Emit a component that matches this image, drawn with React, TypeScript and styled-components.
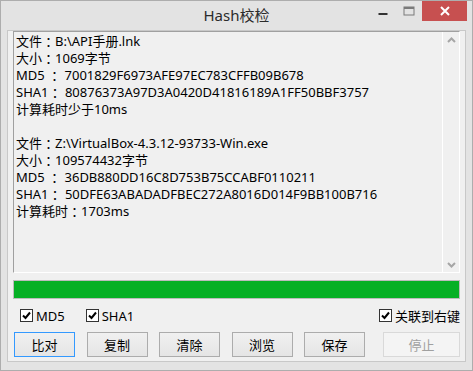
import React from 'react';
import styled, { createGlobalStyle } from 'styled-components';

const GlobalStyle = createGlobalStyle`
  html, body {
    margin: 0;
    padding: 0;
    background: #ffffff;
  }
  * {
    box-sizing: border-box;
  }
`;

const uiFont = `"Noto Sans", "Noto Sans CJK SC", sans-serif`;

const Window = styled.div`
  width: 473px;
  height: 371px;
  border: 1px solid #adadad;
  background-color: #e3e3e3;
  display: flex;
  flex-direction: column;
  font-family: ${uiFont};
`;

const TitleBar = styled.div`
  height: 29px;
  display: grid;
  grid-template-columns: 1fr auto 1fr;
  align-items: start;
`;

const Title = styled.div`
  grid-column: 2;
  padding-top: 4px;
  font-size: 15px;
  line-height: 20px;
  color: #2b2b2b;
`;

const Controls = styled.div`
  grid-column: 3;
  justify-self: end;
  display: flex;
  margin-right: 5px;
`;

const CtrlButton = styled.div<{ $wide?: boolean; $close?: boolean }>`
  width: ${({ $wide }) => ($wide ? '45px' : '26px')};
  height: 20px;
  display: flex;
  align-items: center;
  justify-content: center;
  background-color: ${({ $close }) => ($close ? '#c75050' : 'transparent')};
`;

const Client = styled.div`
  flex: 1;
  margin: 0 6px 8px 6px;
  border: 1px solid #c8c8c8;
  background-color: #f0f0f0;
  padding: 0 5px 4px 5px;
  display: flex;
  flex-direction: column;
`;

const TextBox = styled.div`
  height: 242px;
  border-top: 1px solid #a0a0a0;
  border-left: 1px solid #a0a0a0;
  border-right: 1px solid #ffffff;
  border-bottom: 1px solid #ffffff;
  display: flex;
  background-color: #f0f0f0;
`;

const TextArea = styled.div`
  flex: 1;
  padding: 1px 0 0 2px;
  font-family: ${uiFont};
  font-size: 13px;
  line-height: 17px;
  color: #000000;
  white-space: pre;
  overflow: hidden;
`;

const Line = styled.div`
  height: 17px;
`;

/* full-width colon centred like the Windows UI font */
const Colon = styled.span`
  display: inline-block;
  height: 17px;
  line-height: 17px;
  vertical-align: top;
  overflow: hidden;
  font-family: "Noto Sans CJK JP", "Noto Sans CJK SC", sans-serif;
`;

const ScrollBar = styled.div`
  width: 17px;
  border-left: 1px solid #ffffff;
  display: flex;
  flex-direction: column;
  justify-content: space-between;
  align-items: center;
  padding: 5px 0 4px 0;
`;

const Progress = styled.div`
  margin-top: 7px;
  height: 19px;
  border: 1px solid #bcbcbc;
  background-color: #e6e6e6;
`;

const ProgressFill = styled.div`
  height: 100%;
  background-color: #06b025;
`;

const CheckRow = styled.div`
  height: 33px;
  display: flex;
  align-items: center;
  padding: 0 0 0 7px;
`;

const CheckItem = styled.label<{ $push?: boolean }>`
  display: flex;
  align-items: center;
  gap: 3px;
  margin-right: 21px;
  margin-left: ${({ $push }) => ($push ? 'auto' : '0')};
  font-size: 13px;
  color: #000000;
  &:last-child {
    margin-right: 0;
  }
`;

const Box = styled.span`
  width: 13px;
  height: 13px;
  border: 1px solid #333333;
  background-color: #ffffff;
  display: flex;
  align-items: center;
  justify-content: center;
`;

const ButtonRow = styled.div`
  display: flex;
  gap: 11.5px;
  padding-left: 1px;
`;

const Button = styled.div<{ $default?: boolean; $disabled?: boolean; $width?: number }>`
  width: ${({ $width }) => $width ?? 61}px;
  height: 25px;
  display: flex;
  align-items: center;
  justify-content: center;
  font-size: 13px;
  color: ${({ $disabled }) => ($disabled ? '#a0a0a0' : '#000000')};
  border: 1px solid
    ${({ $default, $disabled }) =>
      $default ? '#3399ff' : $disabled ? '#d9d9d9' : '#acacac'};
  background: ${({ $disabled }) =>
    $disabled ? '#f4f4f4' : 'linear-gradient(#f0f0f0, #e5e5e5)'};
  margin-left: ${({ $disabled }) => ($disabled ? 'auto' : '0')};
`;

const Check = () => (
  <Box>
    <svg width="11" height="11" viewBox="0 0 11 11">
      <path d="M2 5.5 L4.5 8 L9 2.5" fill="none" stroke="#000" strokeWidth="2" />
    </svg>
  </Box>
);

const lines = [
  '文件：B:\\API手册.lnk',
  '大小：1069字节',
  'MD5 ： 7001829F6973AFE97EC783CFFB09B678',
  'SHA1： 80876373A97D3A0420D41816189A1FF50BBF3757',
  '计算耗时少于10ms',
  '',
  '文件：Z:\\VirtualBox-4.3.12-93733-Win.exe',
  '大小：109574432字节',
  'MD5 ： 36DB880DD16C8D753B75CCABF0110211',
  'SHA1： 50DFE63ABADADFBEC272A8016D014F9BB100B716',
  '计算耗时：1703ms',
];

const renderLine = (text: string) => {
  const parts = text.split('：');
  return parts.map((p, i) => (
    <React.Fragment key={i}>
      {i > 0 && <Colon>：</Colon>}
      {p}
    </React.Fragment>
  ));
};

const App: React.FC = () => {
  return (
    <>
      <GlobalStyle />
      <Window>
        <TitleBar>
          <Title>Hash校检</Title>
          <Controls>
            <CtrlButton>
              <svg width="10" height="10" viewBox="0 0 10 10">
                <rect x="0.5" y="7" width="9" height="2" fill="#333" />
              </svg>
            </CtrlButton>
            <CtrlButton>
              <svg width="12" height="10" viewBox="0 0 12 10">
                <rect x="1" y="1" width="10" height="8" fill="none" stroke="#7a7a7a" strokeWidth="1" />
                <rect x="1" y="1" width="10" height="2" fill="#7a7a7a" />
              </svg>
            </CtrlButton>
            <CtrlButton $wide $close>
              <svg width="10" height="10" viewBox="0 0 10 10">
                <path d="M1 1 L9 9 M9 1 L1 9" stroke="#fff" strokeWidth="2" />
              </svg>
            </CtrlButton>
          </Controls>
        </TitleBar>
        <Client>
          <TextBox>
            <TextArea>
              {lines.map((l, i) => (
                <Line key={i}>{renderLine(l)}</Line>
              ))}
            </TextArea>
            <ScrollBar>
              <svg width="9" height="6" viewBox="0 0 9 6">
                <path d="M1 5 L4.5 1.5 L8 5" fill="none" stroke="#a6a6a6" strokeWidth="2" />
              </svg>
              <svg width="9" height="6" viewBox="0 0 9 6">
                <path d="M1 1 L4.5 4.5 L8 1" fill="none" stroke="#a6a6a6" strokeWidth="2" />
              </svg>
            </ScrollBar>
          </TextBox>
          <Progress>
            <ProgressFill style={{ width: '100%' }} />
          </Progress>
          <CheckRow>
            <CheckItem>
              <Check />
              MD5
            </CheckItem>
            <CheckItem>
              <Check />
              SHA1
            </CheckItem>
            <CheckItem $push>
              <Check />
              关联到右键
            </CheckItem>
          </CheckRow>
          <ButtonRow>
            <Button $default>比对</Button>
            <Button>复制</Button>
            <Button>清除</Button>
            <Button>浏览</Button>
            <Button>保存</Button>
            <Button $disabled $width={77}>停止</Button>
          </ButtonRow>
        </Client>
      </Window>
    </>
  );
};

export default App;
